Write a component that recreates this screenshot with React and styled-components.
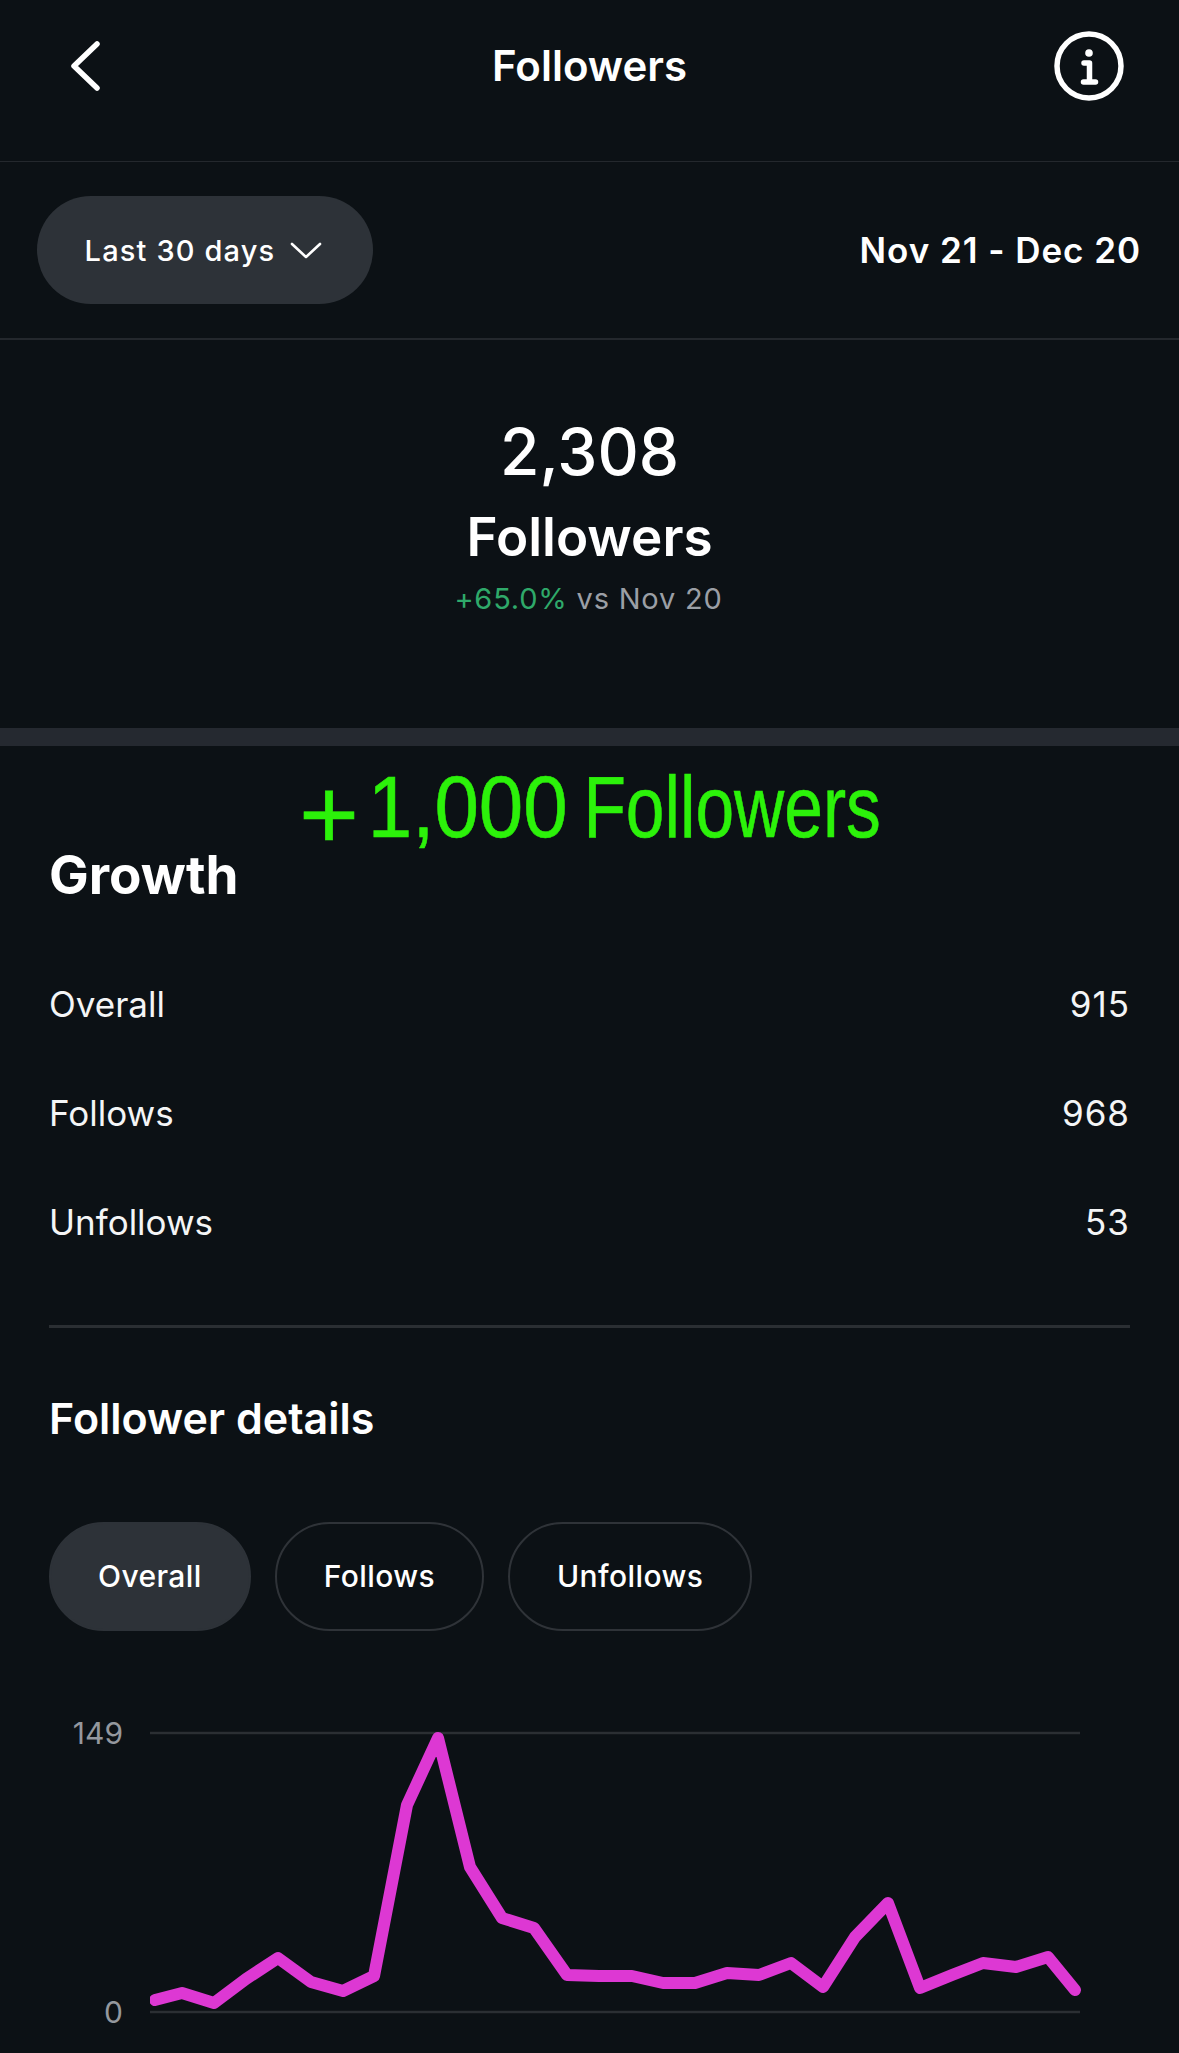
import React from 'react';
import styled, { createGlobalStyle } from 'styled-components';

const GlobalStyle = createGlobalStyle`
  html, body {
    margin: 0;
    padding: 0;
    height: 2053px;
    overflow: hidden;
    background: #0c1115;
  }
`;

const growthRows = [
  { label: 'Overall', value: '915' },
  { label: 'Follows', value: '968' },
  { label: 'Unfollows', value: '53' },
];

const filters = [
  { label: 'Overall', active: true },
  { label: 'Follows' },
  { label: 'Unfollows' },
];

const chartPoints = [
  [155, 2000], [182, 1993], [214, 2003], [246, 1979], [278, 1958], [311, 1982],
  [343, 1991], [374, 1976], [407, 1805], [438, 1738], [470, 1867], [502, 1918],
  [534, 1928], [567, 1975], [599, 1976], [632, 1976], [663, 1983], [695, 1983],
  [727, 1973], [759, 1975], [791, 1963], [823, 1987], [855, 1937], [888, 1903],
  [920, 1988], [952, 1975], [983, 1963], [1016, 1967], [1048, 1957], [1075, 1990],
];

function App() {
  return (
    <Page>
      <GlobalStyle />
      <Header>
        <IconButton aria-label="Back">
          <svg width="40" height="60" viewBox="0 0 40 60">
            <path d="M31 8 L8 30 L31 52" fill="none" stroke="#fff" strokeWidth="5.5" strokeLinecap="round" strokeLinejoin="round" />
          </svg>
        </IconButton>
        <HeaderTitle>Followers</HeaderTitle>
        <IconButton aria-label="Info">
          <svg width="72" height="72" viewBox="0 0 72 72">
            <circle cx="36" cy="36" r="32" fill="none" stroke="#fff" strokeWidth="5.5" />
            <circle cx="36" cy="23" r="3.8" fill="#fff" />
            <path d="M31 33 H36.5 V52 M30.5 52 H42.5" fill="none" stroke="#fff" strokeWidth="5.5" strokeLinecap="round" strokeLinejoin="round" />
          </svg>
        </IconButton>
      </Header>

      <RangeBar>
        <RangePill>
          Last 30 days
          <svg width="32" height="17" viewBox="0 0 32 17">
            <path d="M2 2 L16 15 L30 2" fill="none" stroke="#fff" strokeWidth="2.6" strokeLinecap="round" strokeLinejoin="round" />
          </svg>
        </RangePill>
        <DateRange>Nov 21 - Dec 20</DateRange>
      </RangeBar>

      <Summary>
        <Total>2,308</Total>
        <TotalLabel>Followers</TotalLabel>
        <Delta>
          <DeltaValue>+65.0%</DeltaValue> vs Nov 20
        </Delta>
      </Summary>

      <Band />

      <Content>
        <Overlay>
          <OverlayPlus>+</OverlayPlus>
          <OverlayCount>1,000</OverlayCount>
          Followers
        </Overlay>
        <GrowthTitle>Growth</GrowthTitle>
        <StatList>
          {growthRows.map((row) => (
            <StatRow key={row.label}>
              <span>{row.label}</span>
              <StatValue>{row.value}</StatValue>
            </StatRow>
          ))}
        </StatList>
        <Divider />
        <DetailsTitle>Follower details</DetailsTitle>
        <Filters>
          {filters.map((filter) => (
            <FilterPill key={filter.label} $active={filter.active}>
              {filter.label}
            </FilterPill>
          ))}
        </Filters>
        <Chart>
          <Axis>
            <span>149</span>
            <span>0</span>
          </Axis>
          <svg width="931" height="310" viewBox="150 1713 931 310">
            <line x1="150" y1="1733" x2="1080" y2="1733" stroke="#2b2f33" strokeWidth="2.5" />
            <line x1="150" y1="2012" x2="1080" y2="2012" stroke="#2b2f33" strokeWidth="2.5" />
            <polyline
              points={chartPoints.map((p) => p.join(',')).join(' ')}
              fill="none"
              stroke="#dd38d3"
              strokeWidth="12"
              strokeLinecap="round"
              strokeLinejoin="round"
            />
          </svg>
        </Chart>
      </Content>
    </Page>
  );
}

const Page = styled.div`
  width: 1179px;
  height: 2053px;
  overflow: hidden;
  background: #0c1115;
  color: #fff;
  font-family: Inter, "Liberation Sans", sans-serif;
`;

const Header = styled.header`
  height: 162px;
  box-sizing: border-box;
  padding: 0 54px 30px 66px;
  display: flex;
  align-items: center;
  justify-content: space-between;
  border-bottom: 1.5px solid #24282d;
  position: relative;
`;

const IconButton = styled.div`
  display: flex;
  align-items: center;
  justify-content: center;
`;

const HeaderTitle = styled.h1`
  margin: 0;
  font-size: 42px;
  font-weight: 600;
  position: absolute;
  left: 0;
  right: 0;
  top: 42px;
  text-align: center;
  line-height: 48px;
`;

const RangeBar = styled.div`
  height: 178px;
  box-sizing: border-box;
  padding: 0 38px 0 37px;
  display: flex;
  align-items: center;
  justify-content: space-between;
  border-bottom: 2.5px solid #24282d;
`;

const RangePill = styled.div`
  width: 336px;
  height: 108px;
  box-sizing: border-box;
  padding-right: 3px;
  border-radius: 54px;
  background: #2d3238;
  display: flex;
  align-items: center;
  justify-content: center;
  gap: 15px;
  font-size: 29px;
  font-weight: 500;
  letter-spacing: 1.15px;
`;

const DateRange = styled.div`
  font-size: 35px;
  font-weight: 600;
  letter-spacing: 0.95px;
`;

const Summary = styled.section`
  height: 388px;
  box-sizing: border-box;
  padding-top: 70px;
  display: flex;
  flex-direction: column;
  align-items: center;
`;

const Total = styled.div`
  font-size: 64px;
  font-weight: 500;
  line-height: 84px;
`;

const TotalLabel = styled.div`
  font-size: 53px;
  font-weight: 600;
  line-height: 64px;
  margin-top: 11px;
`;

const Delta = styled.div`
  font-size: 29px;
  line-height: 40px;
  letter-spacing: 0.8px;
  color: #9b9fa5;
  margin-top: 10px;
  margin-right: 2px;
  white-space: pre-wrap;
`;

const DeltaValue = styled.span`
  color: #2fa96a;
`;

const Band = styled.div`
  height: 18px;
  background: #252930;
`;

const Content = styled.section`
  position: relative;
  padding: 0 49px 0 49px;
`;

const Overlay = styled.div`
  position: absolute;
  left: 299px;
  top: 6px;
  font-family: "Liberation Sans", sans-serif;
  font-size: 88px;
  line-height: 100px;
  color: #2cf20a;
  -webkit-text-stroke: 0.6px #2cf20a;
  white-space: nowrap;
  transform: scaleX(0.79);
  transform-origin: left center;
`;

const OverlayPlus = styled.span`
  display: inline-block;
  width: 87px;
  font-size: 100px;
  transform: translateY(12px) scaleX(1.3);
  transform-origin: left center;
`;

const OverlayCount = styled.span`
  display: inline-block;
  width: 273px;
  transform: scaleX(1.15);
  transform-origin: left center;
`;

const GrowthTitle = styled.h2`
  margin: 0;
  padding-top: 97px;
  font-size: 53px;
  font-weight: 700;
  line-height: 64px;
`;

const StatList = styled.div`
  margin-top: 42px;
  display: flex;
  flex-direction: column;
`;

const StatRow = styled.div`
  height: 109px;
  display: flex;
  align-items: center;
  justify-content: space-between;
  font-size: 35px;
  color: #f4f5f6;
`;

const StatValue = styled.span`
  letter-spacing: 1px;
`;

const Divider = styled.div`
  height: 2.5px;
  background: #2b2f33;
  margin-top: 49px;
`;

const DetailsTitle = styled.h3`
  margin: 0;
  padding-top: 65px;
  font-size: 43px;
  font-weight: 600;
  line-height: 50px;
`;

const Filters = styled.div`
  margin-top: 79px;
  display: flex;
  gap: 24px;
`;

const FilterPill = styled.div`
  height: 109px;
  box-sizing: border-box;
  padding: 0 47px;
  border-radius: 55px;
  border: 2.5px solid ${(p) => (p.$active ? '#2d3238' : '#2f3338')};
  background: ${(p) => (p.$active ? '#2d3238' : 'transparent')};
  display: flex;
  align-items: center;
  font-size: 30px;
  font-weight: 500;
  letter-spacing: 0.4px;
`;

const Chart = styled.div`
  margin-top: 82px;
  display: flex;
  gap: 27px;
  align-items: flex-start;
`;

const Axis = styled.div`
  width: 74px;
  height: 319px;
  display: flex;
  flex-direction: column;
  justify-content: space-between;
  align-items: flex-end;
  font-size: 30px;
  line-height: 40px;
  color: #94989e;
`;

export default App;
